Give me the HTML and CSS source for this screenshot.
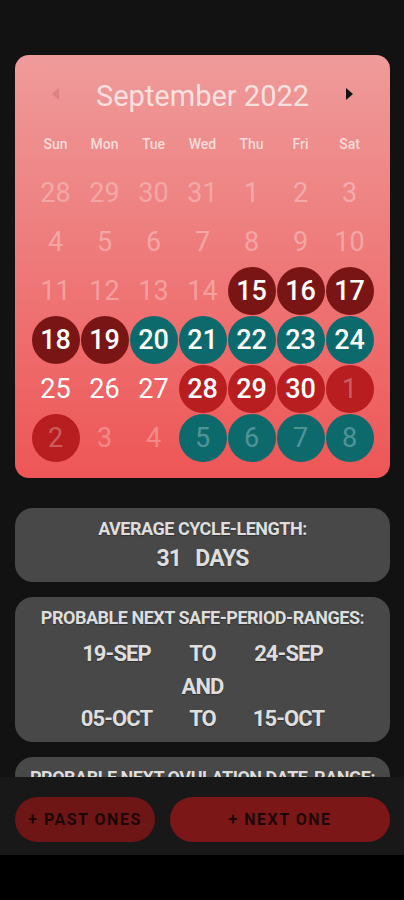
FILE: index.html
```html
<!DOCTYPE html>
<html>
	<head>
		<meta charset="utf-8">
		<title>Cycle calendar</title>
		<link rel="stylesheet" href="styles.css">
	</head>
	<body>
		<div class="screen">
			<div class="scroll">
				<div class="calendar">
					<div class="head">
						<span class="arrow prev"></span>
						<span class="month">September 2022</span>
						<span class="arrow next"></span>
					</div>
					<ul class="week">
						<li>Sun</li><li>Mon</li><li>Tue</li><li>Wed</li><li>Thu</li><li>Fri</li><li>Sat</li>
					</ul>
					<ul class="days">
						<li class="out">28</li><li class="out">29</li><li class="out">30</li><li class="out">31</li><li class="dim">1</li><li class="dim">2</li><li class="dim">3</li>
						<li class="dim">4</li><li class="dim">5</li><li class="dim">6</li><li class="dim">7</li><li class="dim">8</li><li class="dim">9</li><li class="dim">10</li>
						<li class="dim">11</li><li class="dim">12</li><li class="dim">13</li><li class="dim">14</li><li class="period">15</li><li class="period">16</li><li class="period">17</li>
						<li class="period">18</li><li class="period">19</li><li class="safe">20</li><li class="safe">21</li><li class="safe">22</li><li class="safe">23</li><li class="safe">24</li>
						<li>25</li><li>26</li><li>27</li><li class="next">28</li><li class="next">29</li><li class="next">30</li><li class="next out">1</li>
						<li class="next out">2</li><li class="out">3</li><li class="out">4</li><li class="safe out">5</li><li class="safe out">6</li><li class="safe out">7</li><li class="safe out">8</li>
					</ul>
				</div>

				<div class="card">
					<div class="title">AVERAGE CYCLE-LENGTH:</div>
					<div class="value">31   DAYS</div>
				</div>

				<div class="card">
					<div class="title">PROBABLE NEXT SAFE-PERIOD-RANGES:</div>
					<div class="ranges">
						<span>19-SEP</span><span>TO</span><span>24-SEP</span>
						<span></span><span>AND</span><span></span>
						<span>05-OCT</span><span>TO</span><span>15-OCT</span>
					</div>
				</div>

				<div class="card">
					<div class="title">PROBABLE NEXT OVULATION DATE-RANGE:</div>
				</div>
			</div>
			<div class="actions">
				<button class="btn past">+ PAST ONES</button>
				<button class="btn more">+ NEXT ONE</button>
			</div>
		</div>
		<div class="navbar"></div>
	</body>
</html>
```

FILE: styles.css
```css
*{
	margin:0;
	padding:0;
	box-sizing:border-box;
}
ul{
	list-style:none;
}
body{
	background:#121212;
	font-family:Roboto, "Liberation Sans", sans-serif;
	width:404px;
}
.screen{
	height:855px;
	display:flex;
	flex-direction:column;
}
.scroll{
	flex:1;
	overflow:hidden;
	padding:55px 14px 0 15px;
}

/* calendar */
.calendar{
	background:linear-gradient(#ef9b9b, #ee5656);
	border-radius:14px;
	padding:24px 16px 16px;
}
.calendar .head{
	display:grid;
	grid-template-columns:49px 1fr 49px;
	align-items:center;
	height:34px;
}
.calendar .month{
	text-align:center;
	font-size:29px;
	color:rgba(255,240,240,0.85);
}
.arrow{
	justify-self:center;
	width:0;
	height:0;
	border-top:6px solid transparent;
	border-bottom:6px solid transparent;
}
.arrow.prev{
	border-right:7px solid rgba(150,40,40,0.18);
	margin-top:-4px;
}
.arrow.next{
	border-left:7px solid #111;
	margin-top:-4px;
}
.week, .days{
	display:grid;
	grid-template-columns:repeat(7, 49px);
}
.week{
	margin-top:17px;
}
.week li{
	height:28px;
	line-height:28px;
	text-align:center;
	font-size:14px;
	font-weight:500;
	color:rgba(255,255,255,0.7);
}
.days{
	margin-top:10px;
}
.days li{
	height:49px;
	display:flex;
	align-items:center;
	justify-content:center;
	font-size:27px;
	color:#fff;
	position:relative;
	z-index:0;
}
.days li.period, .days li.safe, .days li.next{
	font-weight:500;
}
.days li.period::before, .days li.safe::before, .days li.next::before{
	content:"";
	position:absolute;
	width:48px;
	height:48px;
	border-radius:50%;
	z-index:-1;
}
.days li.period::before{
	background:#7a1515;
}
.days li.safe::before{
	background:#0c6a6d;
}
.days li.next::before{
	background:#b81d1f;
}
.days li.dim{
	color:rgba(255,255,255,0.32);
}
.days li.out{
	color:rgba(255,255,255,0.3);
	font-weight:400;
}

/* info cards */
.card{
	background:#484848;
	border-radius:18px;
	margin-top:30px;
	padding:10px 0 10px;
	text-align:center;
	color:#dedede;
	font-weight:700;
	letter-spacing:-0.03em;
	text-shadow:0 1px 1px rgba(0,0,0,0.35);
}
.card + .card{
	margin-top:15px;
}
.card .title{
	font-size:18px;
	line-height:22px;
}
.card .value{
	font-size:23px;
	line-height:26px;
	margin-top:6px;
	white-space:pre;
	letter-spacing:-0.04em;
}
.ranges{
	display:grid;
	grid-template-columns:repeat(3, 86px);
	justify-content:center;
	margin-top:9px;
	font-size:22px;
	line-height:32.5px;
	margin-bottom:-4px;
	letter-spacing:-0.04em;
}

/* bottom actions */
.actions{
	height:78px;
	background:#181818;
	display:flex;
	align-items:center;
	gap:15px;
	padding:7px 14px 0 15px;
}
.btn{
	height:45px;
	border:0;
	border-radius:23px;
	font-family:Roboto, "Liberation Sans", sans-serif;
	font-size:16px;
	font-weight:700;
	letter-spacing:1.5px;
	color:#1c0606;
}
.btn.past{
	width:140px;
	background:#6e1515;
}
.btn.more{
	flex:1;
	background:#7c1717;
}
.navbar{
	height:45px;
	background:#000;
}
```
